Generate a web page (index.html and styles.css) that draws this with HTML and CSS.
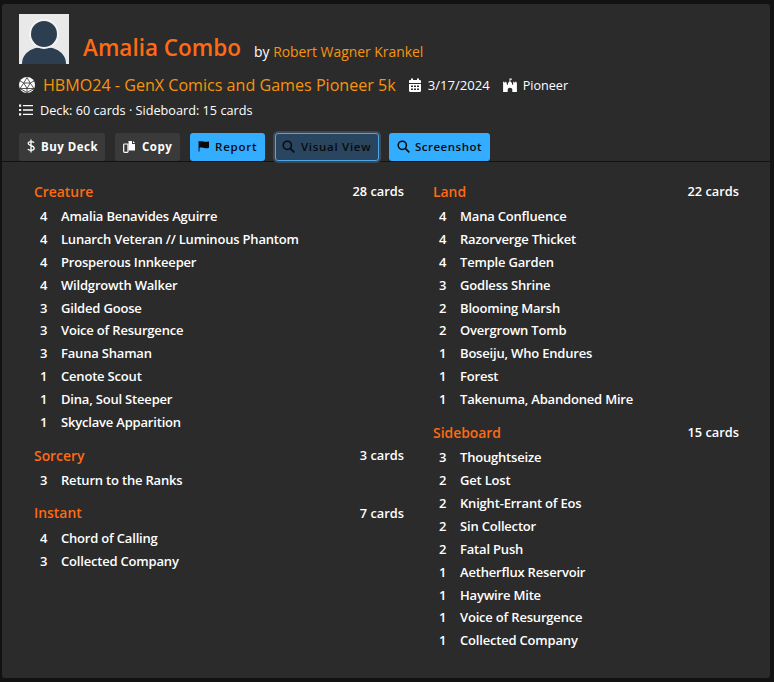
FILE: index.html
```html
<!DOCTYPE html>
<html lang="en">
<head>
<meta charset="utf-8">
<title>Amalia Combo</title>
<link rel="stylesheet" href="styles.css">
</head>
<body>
<main class="card">
  <header class="head">
    <div class="title-row">
      <svg class="avatar" viewBox="0 0 50 50"><rect width="50" height="50" fill="#e9e9e9"/><path d="M3 50C3 39 13 33 25 33S47 39 47 50Z" fill="#2c3e50"/><circle cx="25" cy="20" r="15" fill="#f4f4f4"/><circle cx="25" cy="20" r="13" fill="#2c3e50"/></svg>
      <h1 class="title">Amalia Combo</h1>
      <span class="by">by <a class="author">Robert Wagner Krankel</a></span>
    </div>
    <div class="event-row">
      <svg class="ico-d20" viewBox="0 0 16 16"><circle cx="8" cy="8" r="8" fill="#fff"/><path d="M8 .5 4.800 6 1 4M8 .5 11.200 6 15 4M4.800 6h6.400L8 11.500ZM4.800 6 1 11.500 8 11.500M11.200 6 15 11.500 8 11.500M1 11.500 8 15.500 15 11.500M8 11.500v4" fill="none" stroke="#2b2b2b" stroke-width=".8"/></svg>
      <a class="event">HBMO24 - GenX Comics and Games Pioneer 5k</a>
      <svg class="ico-meta" viewBox="0 0 14 14"><path d="M1 3.200C1 2.500 1.500 2 2.200 2H3V.5h2V2h4V.5h2V2h.8c.7 0 1.200.5 1.200 1.200V5H1ZM1 6h12v6.800c0 .7-.5 1.200-1.200 1.200H2.200C1.500 14 1 13.500 1 12.800Z" fill="#fff"/><path d="M3 7.500h2v1.500H3zM6 7.500h2v1.500H6zM9 7.500h2v1.500H9zM3 10.500h2V12H3zM6 10.500h2V12H6zM9 10.500h2V12H9z" fill="#2b2b2b"/></svg>
      <span class="date">3/17/2024</span>
      <svg class="ico-castle" viewBox="0 0 14 14"><path d="M6.500.5h2.300v1.200H7.400V3.500L9 5v2l1.200-.8V3.800h.9v.8h.8v-.8h.9v.8h.8v-.8h.3V14H9.300V11.500C9.300 10.400 8.200 9.700 7 9.700S4.700 10.400 4.700 11.500V14H.1V3.800h.9v.8h.8v-.8h.9v.8h.8v-.8h.2v2.400L5 7V5L6.500 3.500Z" fill="#fff"/></svg>
      <span class="format">Pioneer</span>
    </div>
    <div class="count-row">
      <svg class="ico-list" viewBox="0 0 14 12"><path d="M0 .5h2.200v2.200H0zM0 4.900h2.200v2.200H0zM0 9.300h2.200v2.200H0zM4 1h10v1.300H4zM4 5.350h10v1.300H4zM4 9.700h10v1.300H4z" fill="#fff"/></svg>
      <span>Deck: 60 cards · Sideboard: 15 cards</span>
    </div>
    <div class="actions">
      <a class="btn btn-dark btn-buy"><svg class="btn-ico" viewBox="0 0 8 14"><path d="M7 3.700C6.500 3 5.500 2.700 4 2.700 2.200 2.700 1.200 3.400 1.200 4.600 1.200 7.300 7.200 6 7.200 9.300 7.200 10.600 5.900 11.300 4 11.300 2.500 11.300 1.400 10.900.8 10M4 .5v13" fill="none" stroke="#fff" stroke-width="1.300"/></svg>Buy Deck</a>
      <a class="btn btn-dark btn-copy"><svg class="btn-ico ico-wide" viewBox="0 0 13 13"><path d="M5.500 1H9v3h3v6.500H5.500Z" fill="#fff"/><path d="M10 1l2 2h-2Z" fill="#fff"/><rect x=".7" y="4" width="4.300" height="8.300" rx=".8" fill="none" stroke="#fff" stroke-width="1.200"/></svg>Copy</a>
      <a class="btn btn-blue btn-report"><svg class="btn-ico ico-flag" viewBox="0 0 13 13"><path d="M.6 1.200h1v11.300h-1ZM1.600 1.800C4 .4 6.500 3 11.900 1.500V8.300C7 10 4 7.200 1.600 8.600Z" fill="#0a0a0a"/></svg>Report</a>
      <a class="btn btn-active btn-visual"><svg class="btn-ico ico-wide" viewBox="0 0 13 13"><circle cx="5.300" cy="5.300" r="4.100" fill="none" stroke="#0a0a0a" stroke-width="1.500"/><path d="M8.300 8.300l4 4" stroke="#0a0a0a" stroke-width="1.700"/></svg>Visual View</a>
      <a class="btn btn-blue btn-shot"><svg class="btn-ico ico-wide" viewBox="0 0 13 13"><circle cx="5.300" cy="5.300" r="4.100" fill="none" stroke="#0a0a0a" stroke-width="1.500"/><path d="M8.300 8.300l4 4" stroke="#0a0a0a" stroke-width="1.700"/></svg>Screenshot</a>
    </div>
  </header>
  <div class="deck">
    <div class="col">
      <section class="group">
        <div class="group-head"><h2>Creature</h2><span>28 cards</span></div>
        <ul>
          <li><b>4</b>Amalia Benavides Aguirre</li>
          <li><b>4</b>Lunarch Veteran // Luminous Phantom</li>
          <li><b>4</b>Prosperous Innkeeper</li>
          <li><b>4</b>Wildgrowth Walker</li>
          <li><b>3</b>Gilded Goose</li>
          <li><b>3</b>Voice of Resurgence</li>
          <li><b>3</b>Fauna Shaman</li>
          <li><b>1</b>Cenote Scout</li>
          <li><b>1</b>Dina, Soul Steeper</li>
          <li><b>1</b>Skyclave Apparition</li>
        </ul>
      </section>
      <section class="group">
        <div class="group-head"><h2>Sorcery</h2><span>3 cards</span></div>
        <ul>
          <li><b>3</b>Return to the Ranks</li>
        </ul>
      </section>
      <section class="group">
        <div class="group-head"><h2>Instant</h2><span>7 cards</span></div>
        <ul>
          <li><b>4</b>Chord of Calling</li>
          <li><b>3</b>Collected Company</li>
        </ul>
      </section>
    </div>
    <div class="col">
      <section class="group">
        <div class="group-head"><h2>Land</h2><span>22 cards</span></div>
        <ul>
          <li><b>4</b>Mana Confluence</li>
          <li><b>4</b>Razorverge Thicket</li>
          <li><b>4</b>Temple Garden</li>
          <li><b>3</b>Godless Shrine</li>
          <li><b>2</b>Blooming Marsh</li>
          <li><b>2</b>Overgrown Tomb</li>
          <li><b>1</b>Boseiju, Who Endures</li>
          <li><b>1</b>Forest</li>
          <li><b>1</b>Takenuma, Abandoned Mire</li>
        </ul>
      </section>
      <section class="group">
        <div class="group-head"><h2>Sideboard</h2><span>15 cards</span></div>
        <ul>
          <li><b>3</b>Thoughtseize</li>
          <li><b>2</b>Get Lost</li>
          <li><b>2</b>Knight-Errant of Eos</li>
          <li><b>2</b>Sin Collector</li>
          <li><b>2</b>Fatal Push</li>
          <li><b>1</b>Aetherflux Reservoir</li>
          <li><b>1</b>Haywire Mite</li>
          <li><b>1</b>Voice of Resurgence</li>
          <li><b>1</b>Collected Company</li>
        </ul>
      </section>
    </div>
  </div>
</main>
</body>
</html>
```

FILE: styles.css
```css
* { box-sizing: border-box; }
html, body { margin: 0; height: 100%; }
body {
  background: #121212;
  color: #fff;
  font-family: "Open Sans", "Noto Sans", sans-serif;
  font-size: 13.5px;
  padding: 4px 4px 4px 2px;
}
.card {
  width: 768px;
  height: 674px;
  background: #2b2b2b;
  border-radius: 3px;
}
.head {
  height: 158px;
  padding: 10px 17px 0;
  border-bottom: 1px solid #121212;
}
.title-row { display: flex; align-items: flex-end; height: 50px; }
.avatar { width: 50px; height: 50px; flex: none; }
.title {
  margin: 0 0 1px 14px;
  font-size: 22.500px;
  font-weight: 600;
  line-height: 30px;
  color: #ff6a13;
}
.by { margin: 0 0 0 13px; font-size: 13.900px; line-height: 24px; }
.author { color: #f7940e; }
.event-row { display: flex; align-items: center; height: 22px; margin-top: 10px; }
.ico-d20 { width: 16px; height: 16px; flex: none; margin-right: 8px; }
.event { color: #f7940e; font-size: 16.100px; }
.ico-meta { width: 14px; height: 14px; margin-left: 12px; margin-right: 6px; }
.ico-castle { width: 14px; height: 14px; margin-left: 13px; margin-right: 6px; }
.date { font-size: 13.100px; }
.format { font-size: 12.600px; }
.count-row { display: flex; align-items: center; height: 20px; margin-top: 4px; font-size: 12.700px; }
.ico-list { width: 14px; height: 12px; margin-right: 7px; }
.actions { display: flex; gap: 10px; margin-top: 13px; }
.btn {
  display: flex;
  align-items: center;
  height: 28px;
  padding: 0 0 2px 8px;
  border-radius: 3px;
  font-family: "Open Sans", sans-serif;
  font-size: 11.500px;
  font-weight: 700;
  letter-spacing: .5px;
}
.btn-buy { width: 86px; }
.btn-copy { width: 65px; }
.btn-report { width: 75px; letter-spacing: .8px; }
.btn-visual { width: 104px; padding-left: 6px; letter-spacing: .7px; }
.btn-shot { width: 101px; }
.btn-shot .btn-ico { margin-right: 5px; }
.btn-dark { background: #3a3a3a; color: #fff; }
.btn-blue { background: #33adff; color: #0a0a0a; font-weight: 600; }
.btn-active {
  background: #2a4560;
  color: #0a0a0a;
  font-weight: 600;
  border: 1px solid #4fa6e0;
  box-shadow: 0 0 0 2px #3b4a59;
}
.btn-ico { width: 8px; height: 14px; margin-right: 6px; flex: none; }
.ico-wide { width: 13px; height: 13px; }
.ico-flag { width: 12px; height: 12px; margin-right: 5px; }
.deck { display: grid; grid-template-columns: 370px 306px; column-gap: 29px; padding: 15.500px 0 0 32px; }
.group { margin-bottom: 8px; }
.group-head { display: flex; justify-content: space-between; align-items: center; height: 27px; font-weight: 600; font-size: 12.800px; }
.group-head h2 { margin: 0; font-size: 13.900px; font-weight: 600; color: #ff6a13; }
ul { list-style: none; margin: 0; padding: 0 0 0 6px; }
li { display: flex; height: 22.920px; align-items: center; font-size: 13px; font-weight: 600; letter-spacing: -.19px; }
li b { width: 21px; font-weight: 600; }
```
